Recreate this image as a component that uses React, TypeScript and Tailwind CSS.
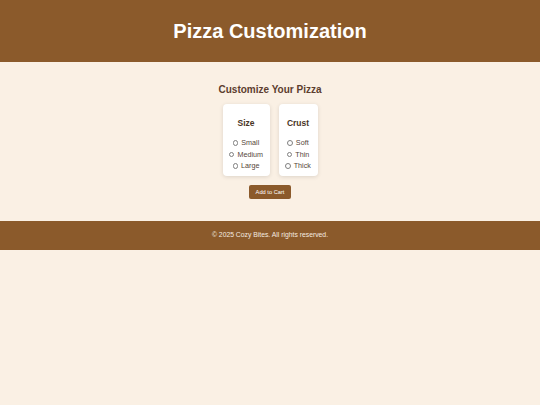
const sizes = ['Small', 'Medium', 'Large']
const crusts = ['Soft', 'Thin', 'Thick']

function OptionCard({ title, options }: { title: string; options: string[] }) {
  return (
    <div className="flex h-[72px] flex-col items-center rounded-[4px] bg-white px-[6px] pt-[14px] shadow-[0_1px_4px_rgba(0,0,0,0.12)]">
      <h3 className="text-[8.5px] font-bold leading-[10px] text-[#4a3526]">{title}</h3>
      <div className="mt-[9px] flex flex-col items-center">
        {options.map((o) => (
          <label key={o} className="flex h-[11.6px] items-center gap-[3px] text-[7.2px] leading-none text-[#554538]">
            <span className="inline-block h-[5.5px] w-[5.5px] rounded-full border-[0.8px] border-[#808080] bg-white" />
            {o}
          </label>
        ))}
      </div>
    </div>
  )
}

export default function App() {
  return (
    <div className="min-h-screen bg-[#faf0e4] font-['Liberation_Sans',Arial,sans-serif]">
      <header className="flex h-[62px] items-center justify-center bg-[#8b5a2b]">
        <h1 className="text-[20px] font-bold leading-[24px] text-white">Pizza Customization</h1>
      </header>

      <main className="flex flex-col items-center pt-[22px] pb-[22px]">
        <h2 className="text-[10px] font-bold leading-[12px] text-[#5c3d2e]">Customize Your Pizza</h2>
        <div className="mt-[8px] flex gap-[9px]">
          <div className="w-[47px]">
            <OptionCard title="Size" options={sizes} />
          </div>
          <div className="w-[39px]">
            <OptionCard title="Crust" options={crusts} />
          </div>
        </div>
        <button className="mt-[9px] h-[14px] w-[42px] rounded-[2px] bg-[#8b5a2b] text-[5.7px] text-white">
          Add to Cart
        </button>
      </main>

      <footer className="flex h-[29px] items-center justify-center bg-[#8b5a2b]">
        <p className="text-[6.8px] text-[#f5ebe0]">© 2025 Cozy Bites. All rights reserved.</p>
      </footer>
    </div>
  )
}
